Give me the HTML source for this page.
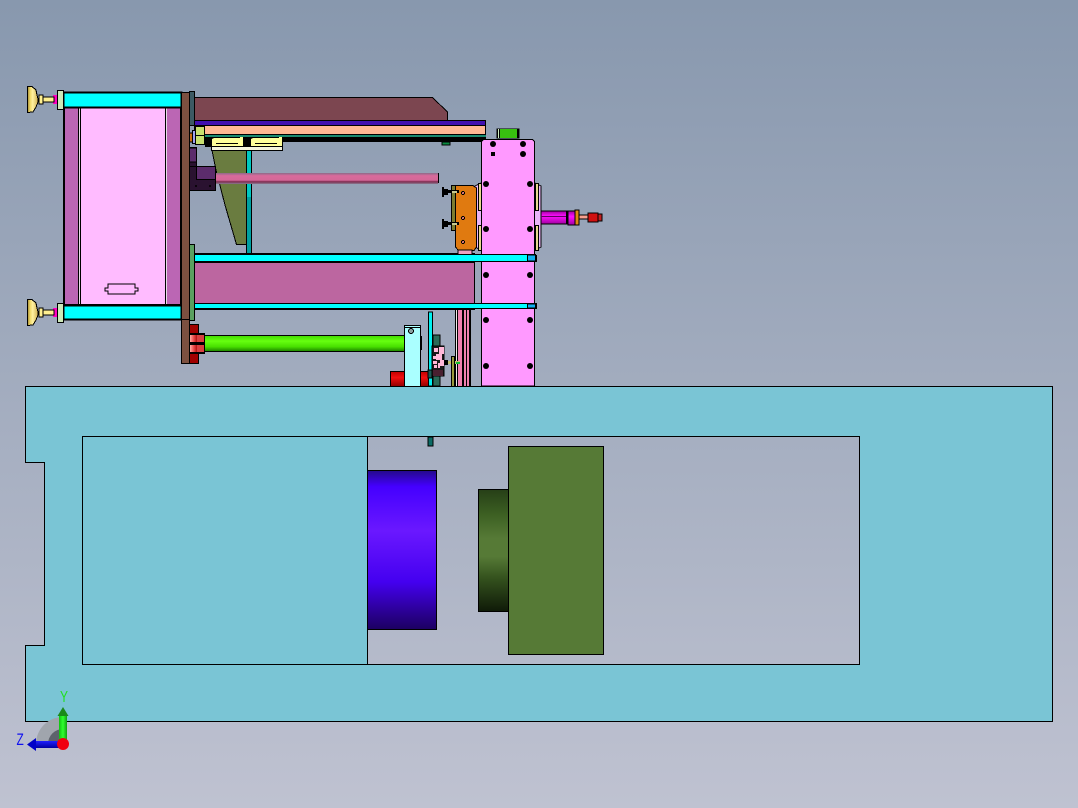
<!DOCTYPE html>
<html>
<head>
<meta charset="utf-8">
<style>
html,body{margin:0;padding:0;width:1078px;height:808px;overflow:hidden;background:#8a9aae}
svg{display:block}
</style>
</head>
<body>
<svg width="1078" height="808" viewBox="0 0 1078 808" xmlns="http://www.w3.org/2000/svg">
<defs>
<linearGradient id="bg" x1="0" y1="0" x2="0" y2="1"><stop offset="0" stop-color="#8898ae"/><stop offset="1" stop-color="#bfc2d1"/></linearGradient>
<linearGradient id="blue" x1="0" y1="0" x2="0" y2="1"><stop offset="0" stop-color="#240a8a"/><stop offset=".1" stop-color="#4400ff"/><stop offset=".38" stop-color="#6a18ff"/><stop offset=".7" stop-color="#4400f0"/><stop offset=".88" stop-color="#2c0098"/><stop offset="1" stop-color="#1c0060"/></linearGradient>
<linearGradient id="dg" x1="0" y1="0" x2="0" y2="1"><stop offset="0" stop-color="#263f17"/><stop offset=".2" stop-color="#3c5f22"/><stop offset=".4" stop-color="#567a36"/><stop offset=".55" stop-color="#567a36"/><stop offset=".72" stop-color="#35531e"/><stop offset="1" stop-color="#0f1a08"/></linearGradient>
<linearGradient id="rod" x1="0" y1="0" x2="0" y2="1"><stop offset="0" stop-color="#8c6a88"/><stop offset=".25" stop-color="#d86a9c"/><stop offset=".65" stop-color="#d46898"/><stop offset=".8" stop-color="#7c2c50"/><stop offset="1" stop-color="#8c7a90"/></linearGradient>
<linearGradient id="lime" x1="0" y1="0" x2="0" y2="1"><stop offset="0" stop-color="#40d800"/><stop offset=".35" stop-color="#66ff10"/><stop offset=".7" stop-color="#48e000"/><stop offset="1" stop-color="#1c8000"/></linearGradient>
<linearGradient id="red" x1="0" y1="0" x2="0" y2="1"><stop offset="0" stop-color="#c00000"/><stop offset=".4" stop-color="#f01010"/><stop offset="1" stop-color="#900000"/></linearGradient>
<linearGradient id="redh" x1="0" y1="0" x2="1" y2="0"><stop offset="0" stop-color="#ffb0a8"/><stop offset=".5" stop-color="#f05050"/><stop offset="1" stop-color="#b01010"/></linearGradient>
<linearGradient id="mag" x1="0" y1="0" x2="0" y2="1"><stop offset="0" stop-color="#a000a0"/><stop offset=".4" stop-color="#ff10ff"/><stop offset="1" stop-color="#a000a0"/></linearGradient>
<linearGradient id="gold" x1="0" y1="0" x2="1" y2="0"><stop offset="0" stop-color="#a08830"/><stop offset=".25" stop-color="#f0d868"/><stop offset=".5" stop-color="#fff0a0"/><stop offset="1" stop-color="#d0b050"/></linearGradient>
<linearGradient id="axg" x1="0" y1="0" x2="1" y2="0"><stop offset="0" stop-color="#10c010"/><stop offset=".5" stop-color="#30ff30"/><stop offset="1" stop-color="#10a010"/></linearGradient>
<linearGradient id="axb" x1="0" y1="0" x2="0" y2="1"><stop offset="0" stop-color="#2020ff"/><stop offset="1" stop-color="#0000a0"/></linearGradient>
</defs>
<rect width="1078" height="808" fill="url(#bg)"/>

<g shape-rendering="crispEdges" stroke="#000" stroke-width="1">
<!-- left frame -->
<rect x="64" y="107" width="117" height="198" fill="#bb66b4" stroke-width="2"/>
<rect x="79" y="108" width="2" height="196" fill="#e8dce8" stroke="none"/>
<rect x="78" y="108" width="1" height="196" fill="#000" stroke="none"/>
<rect x="81" y="108" width="85" height="196" fill="#ffbbff" stroke="none"/>
<rect x="80" y="108" width="1" height="196" fill="#000" stroke="none"/>
<rect x="165" y="108" width="1" height="196" fill="#000" stroke="none"/>
<rect x="166" y="108" width="1" height="196" fill="#e8dce8" stroke="none"/>
<path d="M105 288 L108 288 L108 284 L135 284 L135 288 L138 288 L138 291 L135 291 L135 294 L108 294 L108 291 L105 291 Z" fill="#ffbbff"/>
<rect x="63.500" y="92.500" width="118" height="15" fill="#00ffff" stroke-width="2"/>
<rect x="63.500" y="305.500" width="118" height="14" fill="#00ffff" stroke-width="2"/>
<rect x="57.500" y="90.500" width="6" height="19" fill="#cde8b8"/>
<rect x="57.500" y="303.500" width="6" height="19" fill="#cde8b8"/>
<!-- knobs -->
<g>
<rect x="53" y="95" width="4" height="9" fill="#ff00c0" stroke="none"/>
<rect x="43" y="97" width="11" height="5" fill="#fff090"/>
<rect x="39" y="95" width="4" height="9" fill="#fff090"/>
<path d="M27.500 86.500 L32 86.500 L36 90 L37 95 L38 99 L38 102 L36 107 L33 112 L27.500 112.500 Z" fill="url(#gold)"/>
</g>
<g transform="translate(0 213)">
<rect x="53" y="95" width="4" height="9" fill="#ff00c0" stroke="none"/>
<rect x="43" y="97" width="11" height="5" fill="#fff090"/>
<rect x="39" y="95" width="4" height="9" fill="#fff090"/>
<path d="M27.500 86.500 L32 86.500 L36 90 L37 95 L38 99 L38 102 L36 107 L33 112 L27.500 112.500 Z" fill="url(#gold)"/>
</g>

<!-- top structures -->
<path d="M194.500 97.500 L432.500 97.500 L447.500 112 L447.500 120.500 L194.500 120.500 Z" fill="#7c4650"/>
<rect x="194.500" y="120.500" width="291" height="5" fill="#4010b0"/>
<rect x="194.500" y="125.500" width="291" height="9" fill="#ffb894"/>
<rect x="194" y="135" width="292" height="2" fill="#1a8a70" stroke="none"/>
<rect x="194" y="137" width="292" height="5" fill="#000" stroke="none"/>
<rect x="442" y="142" width="8" height="3" fill="#0a8a40"/>

<!-- olive trapezoid -->
<path d="M212 150 L216 170 L225 205 L236.500 244.500 L247 244.500 L247 150 Z" fill="#6a7c40"/>
<rect x="246.500" y="150.500" width="5" height="103" fill="#00a0a0"/>
<rect x="247" y="150" width="4" height="47" fill="#00c8c0" stroke="none"/>
<!-- rod -->
<rect x="216" y="173" width="222" height="11" fill="url(#rod)" stroke="none"/>
<rect x="438" y="173" width="1" height="10" fill="#000" stroke="none"/>
<!-- dark purple -->
<rect x="189.500" y="147.500" width="7" height="43" fill="#2a1230"/>
<rect x="189.500" y="148" width="7" height="14" fill="#5c2c6c"/>
<rect x="189.500" y="166.500" width="26" height="24" fill="#2a1230"/>
<rect x="196.500" y="166.500" width="19" height="13" fill="#5c2c6c"/>
<!-- yellow clamps -->
<g stroke="none">
<rect x="205" y="137" width="78" height="10" fill="#000"/>
<path d="M212 147 L212 139 L214 138 L240 138 L240 137 L243 137 L243 147 Z" fill="#ffff99"/>
<path d="M251 147 L251 139 L253 138 L279 138 L279 137 L282 137 L282 147 Z" fill="#ffff99"/>
<rect x="216" y="143" width="22" height="1" fill="#000"/>
<rect x="255" y="143" width="22" height="1" fill="#000"/>
</g>
<rect x="211.500" y="146.500" width="71" height="4" fill="#f4f4dc"/>
<!-- lime block -->
<rect x="189" y="133" width="4" height="9" fill="#d07010"/>
<rect x="192.500" y="130.500" width="3" height="13" fill="#a0a0f0"/>
<rect x="195.500" y="126.500" width="9" height="18" fill="#c8e070"/>
<rect x="195" y="135" width="9" height="1" fill="#000" stroke="none"/>

<!-- brown column -->
<rect x="181.500" y="92.500" width="8" height="227" fill="#7c5040"/>
<rect x="181.500" y="319.500" width="8" height="44" fill="#7c5040"/>
<rect x="189.500" y="91.500" width="5" height="34" fill="#3c5a64"/>
<rect x="189.500" y="244.500" width="5" height="76" fill="#5aa060"/>

<!-- mauve lower -->
<rect x="194.500" y="262.500" width="280" height="41" fill="#bc66a0"/>
<rect x="194.500" y="253.500" width="280" height="1" fill="#c878b0"/>
<rect x="194.500" y="308.500" width="280" height="1" fill="#d8a8c0"/>

<!-- red fittings -->
<rect x="189.500" y="324.500" width="9" height="10" fill="#a00000"/>
<rect x="189.500" y="353.500" width="9" height="10" fill="#a00000"/>
<rect x="189" y="333" width="16" height="21" fill="#000" stroke="none"/>
<rect x="190" y="335" width="7" height="7" fill="url(#redh)" stroke="none"/>
<rect x="197" y="335" width="7" height="7" fill="#d84040" stroke="none"/>
<rect x="190" y="345" width="7" height="7" fill="url(#redh)" stroke="none"/>
<rect x="197" y="345" width="7" height="7" fill="#d84040" stroke="none"/>

<!-- lime rod -->
<rect x="204.500" y="335.500" width="200" height="16" fill="url(#lime)"/>
<!-- red cylinder and block -->
<rect x="390.500" y="371.500" width="38" height="15" fill="url(#red)"/>
<rect x="404.500" y="325.500" width="16" height="61" fill="#aaffff"/>
<rect x="404" y="327" width="16" height="1" fill="#000" stroke="none"/>
<rect x="420" y="336" width="2" height="14" fill="#000" stroke="none"/>
<circle cx="411" cy="331" r="2.500" fill="#8aa0a0"/>

<!-- pipes -->
<g stroke="none">
<rect x="455" y="310" width="1" height="76" fill="#000"/>
<rect x="456" y="310" width="1" height="76" fill="#f0e8e8"/>
<rect x="457" y="310" width="1" height="76" fill="#000"/>
<rect x="458" y="310" width="4" height="76" fill="#f080b0"/>
<rect x="462" y="310" width="2" height="76" fill="#000"/>
<rect x="464" y="310" width="2" height="76" fill="#f080b0"/>
<rect x="466" y="310" width="1" height="76" fill="#000"/>
<rect x="467" y="310" width="2" height="76" fill="#f080b0"/>
<rect x="469" y="310" width="2" height="76" fill="#000"/>
</g>

<!-- teal rod and detail -->
<rect x="428.500" y="312" width="4" height="74" fill="#00f0f0"/>
<rect x="433" y="335" width="7" height="51" fill="#2a6a58"/>
<rect x="432" y="346" width="12" height="30" fill="#1a1a1a"/>
<g stroke="none" fill="#ffb8d8">
<path d="M434 348h4v4h-4zM439 347h5v7h-5zM436 354h6v6h-6zM433 356h3v3h-3zM433 361h4v3h-4zM440 360h4v6h-4zM434 365h3v3h-3zM438 363h2v5h-2z"/>
</g>
<rect x="433" y="370" width="10" height="6" fill="#4a2030" stroke="none"/>
<rect x="428" y="370" width="4" height="8" fill="#1c5a54"/>
<rect x="444" y="360" width="4" height="5" fill="#000" stroke="none"/>
<rect x="448" y="361" width="12" height="3" fill="#c4c070" stroke="none"/>
<rect x="451.500" y="356.500" width="3" height="30" fill="#9a9a3c"/>
<rect x="456" y="362" width="4" height="2" fill="#10c030" stroke="none"/>

<!-- tower -->
<path d="M541 186 L541 247 L535 250 L481 250 L475 247 L475 186 L481 183 L535 183 Z" fill="#e8b4f8"/>
<rect x="478.500" y="183.500" width="3" height="27" fill="#e8d890"/>
<rect x="478.500" y="225.500" width="3" height="25" fill="#e8d890"/>
<rect x="535.500" y="183.500" width="3" height="27" fill="#e8d890"/>
<rect x="535.500" y="225.500" width="3" height="25" fill="#e8d890"/>
<path d="M483.500 139.500 L532.500 139.500 L534.500 141.500 L534.500 386 L481.500 386 L481.500 141.500 Z" fill="#ff99ff"/>
<rect x="496.500" y="128.500" width="23" height="10" fill="#000" stroke="none"/>
<rect x="500" y="129" width="17" height="9" fill="#38c010" stroke="none"/>
<rect x="498" y="129" width="1" height="9" fill="#d0f0c0" stroke="none"/>
<!-- orange plate -->
<path d="M458.500 185.500 L473 185.500 L476.500 188 L476.500 247 L474 250.500 L458.500 250.500 L455.500 247 L455.500 185.500 Z" fill="#e07a10"/>
<rect x="451.500" y="185.500" width="4" height="45" fill="#7c7c30"/>
<rect x="458" y="250" width="14" height="5" fill="#f0a0c0"/>
<circle cx="463" cy="193" r="1.500" fill="#f08080"/>
<circle cx="463" cy="218" r="1.500" fill="#f08080"/>
<circle cx="463" cy="242" r="1.500" fill="#f08080"/>

<!-- cyan bars over the tower -->
<rect x="194.500" y="254.500" width="341" height="7" fill="#00ffff"/>
<rect x="194.500" y="303.500" width="341" height="5" fill="#00ffff"/>
<rect x="527.500" y="255" width="8" height="6" fill="#10b0f0"/>
<rect x="527.500" y="304" width="8" height="4" fill="#10b0f0"/>
<rect x="535" y="255" width="2" height="7" fill="#000" stroke="none"/>
<rect x="535" y="303" width="2" height="6" fill="#000" stroke="none"/>
</g>

<!-- holes -->
<g fill="#000">
<circle cx="493" cy="144" r="3"/><circle cx="523" cy="144" r="3"/>
<rect x="491" y="152" width="4" height="4"/><circle cx="523" cy="154" r="3"/>
<circle cx="486" cy="184" r="3"/><circle cx="530" cy="184" r="3"/>
<circle cx="486" cy="229" r="3"/><circle cx="530" cy="229" r="3"/>
<circle cx="486" cy="275" r="3"/><circle cx="530" cy="275" r="3"/>
<circle cx="486" cy="320" r="3"/><circle cx="530" cy="320" r="3"/>
<circle cx="486" cy="366" r="3"/><circle cx="530" cy="366" r="3"/>
<circle cx="196" cy="186" r="1"/><circle cx="210" cy="186" r="1"/>
<!-- bolts -->
<path d="M442 187 L444 187 L444 189 L448 189 L448 190 L459 190 L459 193 L448 193 L448 195 L444 195 L444 197 L442 197 Z"/>
<path d="M442 219 L444 219 L444 221 L448 221 L448 222 L459 222 L459 225 L448 225 L448 227 L444 227 L444 229 L442 229 Z"/>
</g>
<rect x="452" y="191" width="5" height="2" fill="#c8c890"/>
<rect x="452" y="223" width="5" height="2" fill="#c8c890"/>

<!-- magenta cylinder -->
<g shape-rendering="crispEdges">
<rect x="541" y="211" width="27" height="13" fill="url(#mag)" stroke="#000" stroke-width="1"/>
<rect x="541" y="216" width="27" height="1" fill="#600060"/>
<rect x="566" y="211" width="2" height="13" fill="#000"/>
<rect x="568" y="211" width="7" height="14" fill="url(#mag)" stroke="#000" stroke-width="1"/>
<rect x="575" y="210" width="4" height="15" fill="#e08a10" stroke="#000" stroke-width="1"/>
<rect x="579" y="215" width="10" height="4" fill="#f8a090" stroke="#000" stroke-width="1"/>
<rect x="588" y="213" width="10" height="9" fill="#d01010" stroke="#000" stroke-width="1"/>
<rect x="598" y="214" width="4" height="7" fill="#c02020" stroke="#000" stroke-width="1"/>
</g>

<!-- main plate -->
<path shape-rendering="crispEdges" fill-rule="evenodd" fill="#7ac5d5" stroke="#000" stroke-width="1"
 d="M25.500 386.500 L1052.500 386.500 L1052.500 721.500 L25.500 721.500 L25.500 645.500 L44.500 645.500 L44.500 462.500 L25.500 462.500 Z M367.500 436.500 L859.500 436.500 L859.500 664.500 L367.500 664.500 Z"/>
<rect shape-rendering="crispEdges" x="82.500" y="436.500" width="285" height="228" fill="#7ac5d5" stroke="#000"/>
<rect shape-rendering="crispEdges" x="428" y="437" width="5" height="9" fill="#0a6a64" stroke="#000" stroke-width="1"/>

<!-- window contents -->
<rect shape-rendering="crispEdges" x="367.500" y="470.500" width="69" height="159" fill="url(#blue)" stroke="#000"/>
<rect shape-rendering="crispEdges" x="478.500" y="489.500" width="30" height="122" fill="url(#dg)" stroke="#000"/>
<rect shape-rendering="crispEdges" x="508.500" y="446.500" width="95" height="208" fill="#567a36" stroke="#000"/>

<!-- triad -->
<path d="M36 744 A27 27 0 0 1 63 717 L63 744 Z" fill="#a0a5ad"/>
<path d="M48 744 A15 15 0 0 1 63 729 L63 744 Z" fill="#5d626c"/>
<rect x="59" y="715" width="8" height="25" fill="url(#axg)"/>
<path d="M57.500 716 L63 707 L68.500 716 Z" fill="#1a8a1a"/>
<rect x="35" y="741" width="25" height="7" fill="url(#axb)"/>
<path d="M36 738 L27 744.500 L36 751 Z" fill="#0000c8"/>
<circle cx="63" cy="744" r="6" fill="#f00010"/>
<text transform="translate(60 702) scale(.75 1)" font-family="'Liberation Sans',sans-serif" font-size="16" fill="#20e020">Y</text>
<text transform="translate(16.500 745) scale(.7 1)" font-family="'Liberation Sans',sans-serif" font-size="17" fill="#1010f0">Z</text>
</svg>
</body>
</html>
